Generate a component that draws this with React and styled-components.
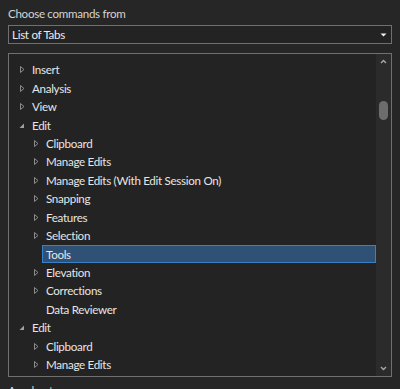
import styled, { createGlobalStyle } from 'styled-components'

const GlobalStyle = createGlobalStyle`
  html, body {
    margin: 0;
    padding: 0;
    background: #262626;
    overflow: hidden;
  }
  body {
    font-family: Lato, "Noto Sans", sans-serif;
    font-size: 11.6px;
    letter-spacing: -0.3px;
    color: #e4e4e4;
  }
`

const Page = styled.div`
  display: flex;
  flex-direction: column;
  padding: 6px 8px 0 8px;
  height: 389px;
  box-sizing: border-box;
  overflow: hidden;

  & > * {
    flex: none;
  }
`

const FieldLabel = styled.div`
  line-height: 16px;
  color: #d4d4d4;
`

const Select = styled.div`
  margin-top: 3px;
  height: 19px;
  box-sizing: border-box;
  border: 1px solid #707070;
  background: #232323;
  display: flex;
  align-items: center;
  justify-content: space-between;
  padding: 0 4px 0 3px;
  color: #ececec;
`

const ListBox = styled.div`
  margin-top: 9px;
  height: 324px;
  box-sizing: border-box;
  border: 1px solid #707070;
  background: #232323;
  display: flex;
  overflow: hidden;
`

const Tree = styled.div`
  flex: 1;
  padding-top: 6.5px;
  overflow: hidden;
`

const Row = styled.div`
  display: flex;
  align-items: stretch;
  height: 18.45px;
  padding-left: ${(p) => p.$level * 14}px;
`

const Expander = styled.div`
  width: 19px;
  flex: none;
  display: flex;
  align-items: center;
  padding-left: 9px;
  box-sizing: border-box;
`

const ItemLabel = styled.div`
  flex: 1;
  display: flex;
  align-items: center;
  padding-left: 3px;
  border: 1px solid ${(p) => (p.$selected ? '#3a80c6' : 'transparent')};
  background: ${(p) => (p.$selected ? '#2e5175' : 'transparent')};
  white-space: nowrap;
  color: #e6e6e6;
`

const ScrollBar = styled.div`
  width: 15px;
  flex: none;
  background: #2b2b2b;
  display: flex;
  flex-direction: column;
  align-items: center;
  padding: 5px 0 5px 0;
  box-sizing: border-box;
`

const Thumb = styled.div`
  width: 9px;
  height: 19px;
  border-radius: 5px;
  background: #6d6d6d;
  margin-top: 37px;
`

const Spacer = styled.div`
  flex: 1;
`

const Caption = styled.div`
  margin-top: 6px;
  line-height: 16px;
  color: #d4d4d4;
`

const Collapsed = () => (
  <svg width="8" height="9" viewBox="0 0 8 9">
    <path d="M2.5 1.5 L6 4.5 L2.5 7.5 Z" fill="none" stroke="#8c8c8c" strokeWidth="1" />
  </svg>
)

const Expanded = () => (
  <svg width="8" height="9" viewBox="0 0 8 9">
    <path d="M6 2.5 L6 7 L1.5 7 Z" fill="#a0a0a0" />
  </svg>
)

const Chevron = ({ up }) => (
  <svg width="7" height="5" viewBox="0 0 7 5">
    <path
      d={up ? 'M1 4 L3.5 1.5 L6 4' : 'M1 1 L3.5 3.5 L6 1'}
      fill="none"
      stroke="#a8a8a8"
      strokeWidth="1.4"
    />
  </svg>
)

const items = [
  { text: 'Insert', level: 0, state: 'closed' },
  { text: 'Analysis', level: 0, state: 'closed' },
  { text: 'View', level: 0, state: 'closed' },
  { text: 'Edit', level: 0, state: 'open' },
  { text: 'Clipboard', level: 1, state: 'closed' },
  { text: 'Manage Edits', level: 1, state: 'closed' },
  { text: 'Manage Edits (With Edit Session On)', level: 1, state: 'closed' },
  { text: 'Snapping', level: 1, state: 'closed' },
  { text: 'Features', level: 1, state: 'closed' },
  { text: 'Selection', level: 1, state: 'closed' },
  { text: 'Tools', level: 1, state: 'leaf', selected: true },
  { text: 'Elevation', level: 1, state: 'closed' },
  { text: 'Corrections', level: 1, state: 'closed' },
  { text: 'Data Reviewer', level: 1, state: 'leaf' },
  { text: 'Edit', level: 0, state: 'open' },
  { text: 'Clipboard', level: 1, state: 'closed' },
  { text: 'Manage Edits', level: 1, state: 'closed' },
  { text: 'Snapping', level: 1, state: 'closed' },
]

export default function App() {
  return (
    <>
      <GlobalStyle />
      <Page>
        <FieldLabel>Choose commands from</FieldLabel>
        <Select>
          <span>List of Tabs</span>
          <svg width="7" height="4" viewBox="0 0 7 4">
            <path d="M0.5 0.5 L6.5 0.5 L3.5 3.5 Z" fill="#f0f0f0" />
          </svg>
        </Select>
        <ListBox>
          <Tree>
            {items.map((item, i) => (
              <Row key={i} $level={item.level}>
                <Expander>
                  {item.state === 'closed' && <Collapsed />}
                  {item.state === 'open' && <Expanded />}
                </Expander>
                <ItemLabel $selected={item.selected}>{item.text}</ItemLabel>
              </Row>
            ))}
          </Tree>
          <ScrollBar>
            <Chevron up />
            <Thumb />
            <Spacer />
            <Chevron />
          </ScrollBar>
        </ListBox>
        <Caption>Accelerator</Caption>
      </Page>
    </>
  )
}
